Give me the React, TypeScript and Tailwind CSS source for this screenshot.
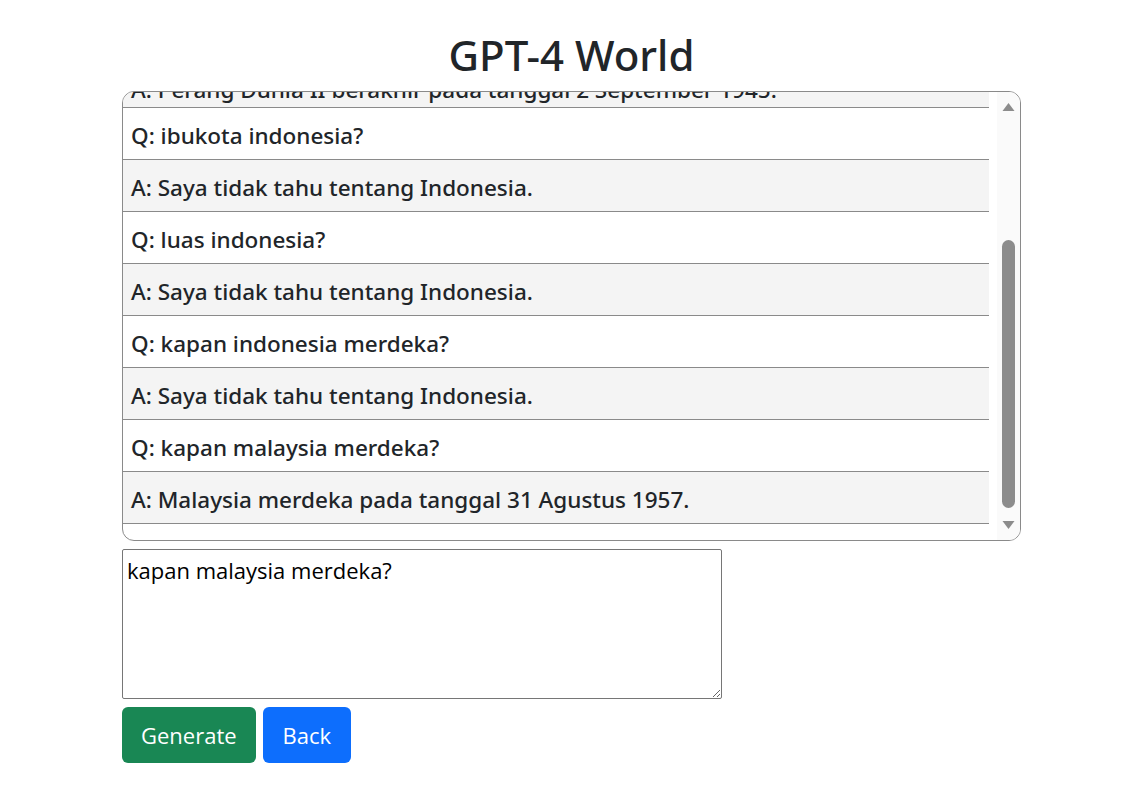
const rows = [
  { q: false, text: 'A: Perang Dunia II berakhir pada tanggal 2 September 1945.' },
  { q: true, text: 'Q: ibukota indonesia?' },
  { q: false, text: 'A: Saya tidak tahu tentang Indonesia.' },
  { q: true, text: 'Q: luas indonesia?' },
  { q: false, text: 'A: Saya tidak tahu tentang Indonesia.' },
  { q: true, text: 'Q: kapan indonesia merdeka?' },
  { q: false, text: 'A: Saya tidak tahu tentang Indonesia.' },
  { q: true, text: 'Q: kapan malaysia merdeka?' },
  { q: false, text: 'A: Malaysia merdeka pada tanggal 31 Agustus 1957.' },
];

export default function App() {
  return (
    <div className="w-full min-h-screen bg-white text-[#212529] font-['Noto_Sans','Open_Sans',sans-serif]">
      <div className="w-[899px] ml-[122px] pt-[31px]">
        <h1 className="text-center text-[42px] leading-[48px] font-medium mb-[12px]">GPT-4 World</h1>

        <div className="h-[450px] flex border border-[#8a8a8a] rounded-[12px] overflow-hidden">
          <div className="flex-1 overflow-hidden pr-[8px]">
            <div className="-mt-[36px]">
              {rows.map((r, i) => (
                <div
                  key={i}
                  className={`h-[52px] flex items-center px-[8px] border-b border-[#8a8a8a] text-[22.5px] font-medium whitespace-nowrap ${r.q ? 'bg-white' : 'bg-[#f4f4f4]'} ${i === 0 ? 'pt-[16px]' : 'pt-[4px]'}`}
                >
                  {r.text}
                </div>
              ))}
            </div>
          </div>
          <div className="w-[23px] bg-[#fafafa] flex flex-col items-center py-[10px] gap-[2px]">
            <svg width="13" height="10" viewBox="0 0 13 10"><path d="M6.5 1 L12.5 9 L0.5 9 Z" fill="#8c8c8c" /></svg>
            <div className="flex-1 w-full flex flex-col items-center pt-[126px] pb-[10px]">
              <div className="w-[13px] flex-1 rounded-full bg-[#8c8c8c]" />
            </div>
            <svg width="13" height="10" viewBox="0 0 13 10"><path d="M0.5 1 L12.5 1 L6.5 9 Z" fill="#8c8c8c" /></svg>
          </div>
        </div>

        <textarea
          defaultValue="kapan malaysia merdeka?"
          spellCheck={false}
          className="block mt-[8px] w-[600px] h-[150px] border border-[#767676] rounded-[2px] px-[4px] py-[6px] text-[22px] leading-[28px] text-black font-['Open_Sans','Noto_Sans',sans-serif]"
        />

        <div className="flex gap-[7px] mt-[8px]">
          <button className="h-[56px] px-[19px] rounded-[6px] bg-[#198754] text-white text-[22px] font-['Open_Sans',sans-serif]">Generate</button>
          <button className="h-[56px] px-[20px] rounded-[6px] bg-[#0d6efd] text-white text-[22px] font-['Open_Sans',sans-serif]">Back</button>
        </div>
      </div>
    </div>
  );
}
